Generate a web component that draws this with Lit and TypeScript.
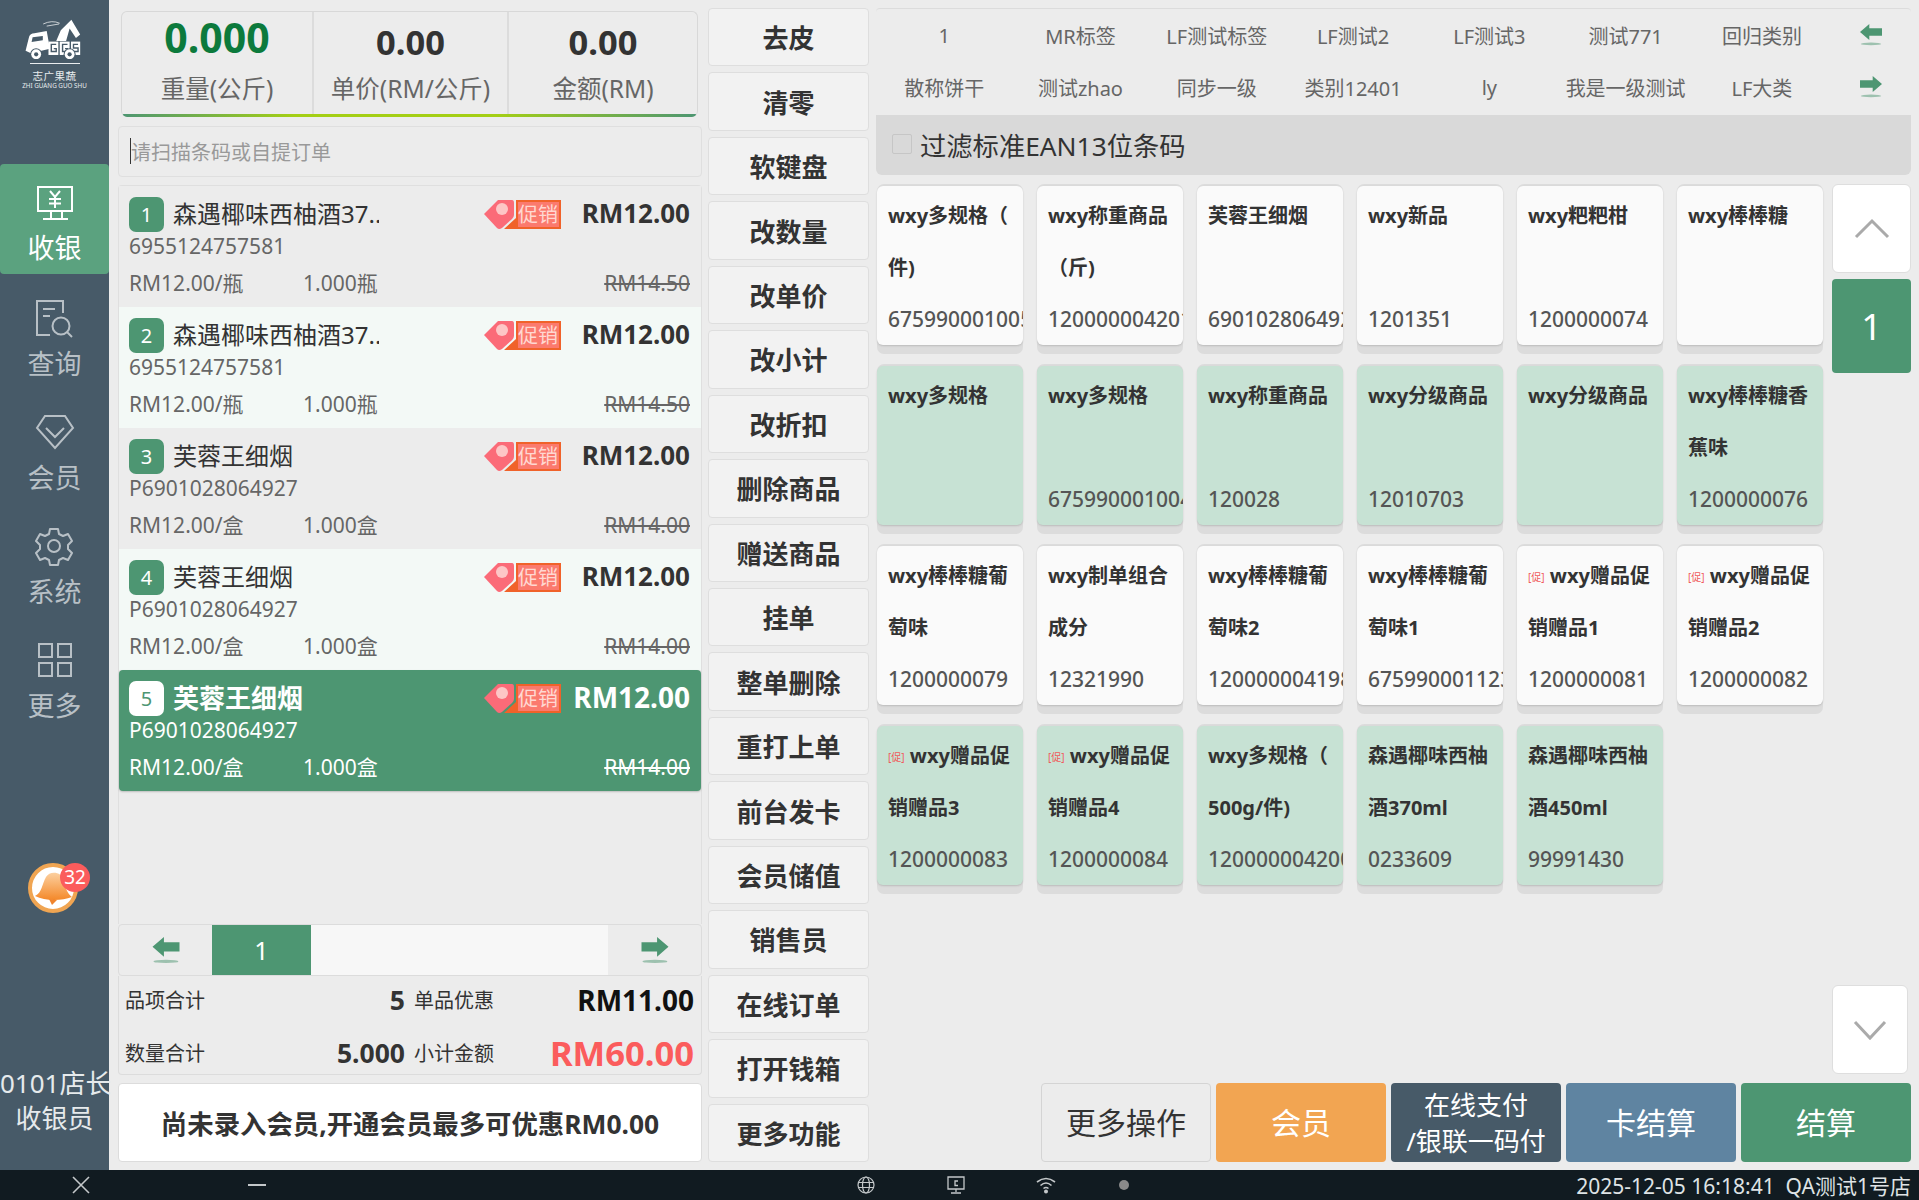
import { LitElement, html, css, svg, unsafeCSS } from "lit";
import { customElement } from "lit/decorators.js";

const FONT = unsafeCSS(`"Noto Sans", "Noto Sans CJK SC", sans-serif`);

const arrow = (dir: "l" | "r") => html`<svg class="arrow" viewBox="0 0 28 26">
  <g fill="#4d9672" transform="${dir === "l" ? "" : "translate(28,0) scale(-1,1)"}">
    <path d="M1 9.5 L12 0 V5 H27 V14 H12 V19 Z"/>
    <ellipse cx="14" cy="23.5" rx="12" ry="1.6" opacity=".5"/>
  </g></svg>`;

const navIcons: Record<string, unknown> = {
  cash: svg`<path d="M3 2H37V26H3ZM15 6L20 12L25 6M20 12V23M14 14H26M14 18.5H26M3 26M16 26V33M27 26V33M8 34H33"/>`,
  query: svg`<path d="M28 14V2H2V36H15M8 10H20M8 17H15"/><circle cx="26" cy="27" r="8.5"/><path d="M32 33l5 5"/>`,
  member: svg`<path d="M10 3H30L38 15L20 35L2 15ZM11 15L20 24L29 15"/>`,
  sys: svg`<path d="M15 2h8l1 5 4 2 5-2 4 7-4 4v4l4 4-4 7-5-2-4 2-1 5h-8l-1-5-4-2-5 2-4-7 4-4v-4l-4-4 4-7 5 2 4-2z" stroke-linejoin="round"/><circle cx="19" cy="19" r="6"/>`,
  more: svg`<path d="M4 3H17V16H4ZM23 3H36V16H23ZM4 22H17V35H4ZM23 22H36V35H23Z"/>`,
};

interface Card { title: unknown; line2?: string; code?: string; green?: boolean }
const promo = html`<span class="cu">[促]</span> `;
const cards: Card[] = [
  { title: "wxy多规格（", line2: "件)", code: "675990001005" },
  { title: "wxy称重商品", line2: "（斤)", code: "120000004201" },
  { title: "芙蓉王细烟", code: "6901028064927" },
  { title: "wxy新品", code: "1201351" },
  { title: "wxy粑粑柑", code: "1200000074" },
  { title: "wxy棒棒糖" },
  { title: "wxy多规格", green: true },
  { title: "wxy多规格", code: "675990001004", green: true },
  { title: "wxy称重商品", code: "120028", green: true },
  { title: "wxy分级商品", code: "12010703", green: true },
  { title: "wxy分级商品", green: true },
  { title: "wxy棒棒糖香", line2: "蕉味", code: "1200000076", green: true },
  { title: "wxy棒棒糖葡", line2: "萄味", code: "1200000079" },
  { title: "wxy制单组合", line2: "成分", code: "12321990" },
  { title: "wxy棒棒糖葡", line2: "萄味2", code: "120000004198" },
  { title: "wxy棒棒糖葡", line2: "萄味1", code: "675990001123" },
  { title: html`${promo}wxy赠品促`, line2: "销赠品1", code: "1200000081" },
  { title: html`${promo}wxy赠品促`, line2: "销赠品2", code: "1200000082" },
  { title: html`${promo}wxy赠品促`, line2: "销赠品3", code: "1200000083", green: true },
  { title: html`${promo}wxy赠品促`, line2: "销赠品4", code: "1200000084", green: true },
  { title: "wxy多规格（", line2: "500g/件)", code: "120000004200", green: true },
  { title: "森遇椰味西柚", line2: "酒370ml", code: "0233609", green: true },
  { title: "森遇椰味西柚", line2: "酒450ml", code: "99991430", green: true },
];

const items = [
  { n: 1, name: "森遇椰味西柚酒37..", code: "6955124757581", u: "瓶", old: "RM14.50" },
  { n: 2, name: "森遇椰味西柚酒37..", code: "6955124757581", u: "瓶", old: "RM14.50" },
  { n: 3, name: "芙蓉王细烟", code: "P6901028064927", u: "盒", old: "RM14.00" },
  { n: 4, name: "芙蓉王细烟", code: "P6901028064927", u: "盒", old: "RM14.00" },
  { n: 5, name: "芙蓉王细烟", code: "P6901028064927", u: "盒", old: "RM14.00" },
];

const midButtons = ["去皮","清零","软键盘","改数量","改单价","改小计","改折扣","删除商品","赠送商品","挂单","整单删除","重打上单","前台发卡","会员储值","销售员","在线订单","打开钱箱","更多功能"];
const tabs1 = ["1","MR标签","LF测试标签","LF测试2","LF测试3","测试771","回归类别"];
const tabs2 = ["散称饼干","测试zhao","同步一级","类别12401","ly","我是一级测试","LF大类"];

@customElement("app-root")
export class AppRoot extends LitElement {
  static styles = css`
    :host { display: flex; flex-direction: column; width: 1919px; height: 1200px; overflow: hidden; background: #ececec; font-family: ${FONT}; color: #333; }
    * { box-sizing: border-box; }
    .main { flex: 1; display: flex; min-height: 0; }
    .side { width: 109px; background: #475a68; display: flex; flex-direction: column; align-items: center; color: #b8c0c6; flex: none; }
    .logo { height: 164px; width: 100%; display: flex; flex-direction: column; align-items: center; padding-top: 18px; color: #fff; }
    .logo svg { display: block; margin-left: -6px; }
    .logo .rule { width: 50px; height: 1px; background: #e8ecee; margin-top: 4px; }
    .logo .cn { font-size: 10.5px; line-height: 11px; letter-spacing: 0.5px; margin-top: 7px; color: #e8ecee; }
    .logo .en { font-size: 6.3px; line-height: 8px; white-space: nowrap; color: #e8ecee; }
    .nav { width: 100%; height: 114px; display: flex; flex-direction: column; align-items: center; justify-content: flex-start; padding-top: 23px; font-size: 27px; line-height: 34px; gap: 8px; }
    .nav svg { fill: none; stroke: currentColor; stroke-width: 2; display: block; }
    .nav.active { height: 110px; background: #5ba27f; color: #fff; border-radius: 4px; padding-top: 21px; gap: 6px; margin-bottom: 2px; }
    .bell { position: relative; width: 50px; height: 50px; margin-top: 131px; margin-left: -3px; }
    .bell svg { display: block; }
    .badge { position: absolute; left: 32px; top: 0; width: 30px; height: 29px; border-radius: 50%; background: #fb5c5c; color: #fff; font-size: 19px; line-height: 29px; text-align: center; }
    .user { margin-top: auto; padding-bottom: 34px; color: #e6eaec; font-size: 26px; line-height: 35px; text-align: center; white-space: nowrap; width: 100%; }

    .left { width: 584px; margin-left: 9px; display: flex; flex-direction: column; padding-top: 11px; flex: none; }
    .scale { height: 106px; margin: 0 4px 0 3px; display: grid; grid-template-columns: 190px 195px 1fr; border: 1px solid #d8d8d8; border-bottom: 0; border-radius: 6px; position: relative; overflow: hidden; }
    .scale::after { content: ""; position: absolute; left: 0; right: 0; bottom: 0; height: 3px; background: linear-gradient(90deg,#4d9672,#a4cf15 30%,#a4cf15 65%,#4d9672); }
    .scale > div { display: flex; flex-direction: column; align-items: center; border-left: 2px solid #dcdcdc; }
    .scale > div:first-child { border-left: 0; }
    .scale b { font-size: 34.5px; line-height: 46px; margin-top: 7px; font-weight: 700; color: #333; }
    .scale b.big { font-size: 41px; color: #0c7a3c; margin-top: 0; line-height: 50px; }
    .scale span { font-size: 24.5px; line-height: 36px; color: #666; margin-top: 6px; }
    .scale div:first-child span { margin-top: 9px; }

    .search { height: 51px; margin-top: 9px; border: 1px solid #dfdfdf; border-radius: 4px; display: flex; align-items: center; padding: 0 0 1px 11px; font-size: 20px; color: #999; }
    .search i { width: 1px; height: 26px; background: #333; }

    .list { margin-top: 8px; flex: 1; display: flex; flex-direction: column; border: 1px solid #dfdfdf; border-bottom: 0; border-radius: 4px 4px 0 0; }
    .item { height: 121px; position: relative; padding: 10px 10px 0 10px; background: #ececec; color: #666; flex: none; }
    .item.even { background: #f3f9f6; }
    .item.sel { background: #4d9672; color: #fff; border-radius: 4px; box-shadow: 0 1px 2px rgba(0,0,0,.2); }
    .row1 { display: flex; align-items: center; height: 36px; }
    .no { width: 35px; height: 35px; border-radius: 7px; background: #4d9672; color: #fff; text-align: center; font-size: 20px; line-height: 35px; flex: none; }
    .sel .no { background: #fff; color: #4d9672; }
    .name { margin-left: 9px; font-size: 24px; line-height: 36px; color: #333; white-space: nowrap; max-width: 206px; overflow: hidden; }
    .sel .name { color: #fff; font-weight: 700; font-size: 26px; }
    .tag { position: absolute; right: 140px; top: 14px; display: block; }
    .price { position: absolute; right: 11px; top: 10px; font-size: 26px; line-height: 34px; font-weight: 700; color: #333; }
    .sel .price { color: #fff; font-size: 28px; }
    .code { font-size: 21px; line-height: 28px; margin-top: 0; }
    .row3 { display: flex; font-size: 21px; line-height: 28px; margin-top: 9px; position: relative; }
    .row3 .q { position: absolute; left: 174px; }
    .row3 s { position: absolute; right: 1px; }

    .pager { height: 52px; display: flex; border: 1px solid #dcdcdc; border-radius: 4px; flex: none; }
    .pager .a { width: 93px; display: flex; align-items: center; justify-content: center; }
    .arrow { display: block; width: 30px; height: 27px; }
    .tabs .arrow { width: 24px; height: 22px; }
    .pager .cur { width: 99px; background: #4d9672; color: #fff; font-size: 25px; display: flex; align-items: center; justify-content: center; }
    .pager .fill { flex: 1; background: #f7f7f7; }
    .sum { height: 99px; border: 1px solid #dcdcdc; border-top: 0; border-radius: 0 0 4px 4px; display: grid; grid-template-rows: 47px 52px; padding: 0 7px 0 6px; flex: none; }
    .sum > div { display: flex; align-items: center; position: relative; white-space: nowrap; }
    .sum > div:last-child { padding-top: 7px; }
    .sum .lab { font-size: 20px; color: #333; }
    .sum .v { position: absolute; right: 289px; font-weight: 700; color: #333; font-size: 26.5px; }
    .sum .lab2 { position: absolute; right: 200px; font-size: 20px; color: #333; }
    .sum .m { margin-left: auto; font-weight: 700; font-size: 28px; color: #111; }
    .sum .m.red { font-size: 34.6px; color: #fb5c5c; }
    .vip { height: 79px; margin: 8px 0; background: #fff; border: 1px solid #dcdcdc; border-radius: 4px; display: flex; align-items: center; justify-content: center; font-size: 26.4px; font-weight: 700; color: #333; flex: none; }

    .mid { width: 161px; margin-left: 6px; padding: 8px 0; display: grid; grid-template-rows: repeat(18, 1fr); gap: 6px; flex: none; }
    .mid div { background: #f2f2f2; border: 1px solid #dedede; border-radius: 4px; display: flex; align-items: center; justify-content: center; font-size: 26px; font-weight: 700; color: #333; }

    .right { width: 1035px; margin-left: 7px; padding-top: 8px; display: flex; flex-direction: column; flex: none; }
    .tabs { height: 107px; display: grid; grid-template-columns: repeat(7, 136.3px) 1fr; grid-template-rows: 1fr 1fr; border-top: 1px solid #dcdcdc; border-radius: 4px 4px 0 0; align-items: center; justify-items: center; font-size: 20px; color: #666; padding-bottom: 2px; }
    .filter { height: 60px; background: #d9d9d9; border-radius: 0 0 6px 6px; display: flex; align-items: center; padding: 0 0 2px 16px; font-size: 26.3px; color: #333; gap: 8px; }
    .filter i { width: 20px; height: 20px; border: 1px solid #c6c6c6; border-radius: 2px; background: #d9d9d9; }
    .body { flex: 1; min-height: 0; margin-top: 9px; display: flex; }
    .gridwrap { flex: 1; min-width: 0; display: flex; flex-direction: column; }
    .cards { display: grid; grid-template-columns: repeat(6, 146px); grid-auto-rows: 170px; column-gap: 14px; row-gap: 10px; margin-left: 1px; }
    .card { height: 170px; border-radius: 7px; background: #dcdcdc; padding: 2px 0 9px; }
    .card > div { height: 100%; border-radius: 6px; background: #fafafa; box-shadow: 0 1px 2px rgba(0,0,0,.15); padding: 4px 11px 0; overflow: hidden; font-size: 20px; font-weight: 700; color: #333; display: grid; grid-template-rows: 51.5px 51.5px 1fr; }
    .card.g > div { background: #c7e2d4; }
    .card span.t { line-height: 51px; white-space: nowrap; }
    .card span.c { line-height: 52px; font-weight: 500; color: #555; white-space: nowrap; font-size: 21px; }
    .cu { color: #f05a5a; font-size: 10px; font-weight: 400; vertical-align: 2px; }
    .pagecol { width: 79px; display: flex; flex-direction: column; flex: none; }
    .pbtn { background: #fff; border: 1px solid #dedede; border-radius: 6px; display: flex; align-items: center; justify-content: center; }
    .pbtn svg { fill: none; stroke: #aaa; stroke-width: 3; }
    .pup { height: 89px; margin-top: 0; }
    .pcur { height: 94px; margin-top: 6px; background: #4d9672; border-radius: 4px; color: #fff; font-size: 36px; display: flex; align-items: center; justify-content: center; }
    .pdown { height: 89px; margin-top: auto; margin-bottom: 9px; width: 76px; }
    .acts { height: 79px; margin: 0 0 8px 165px; display: grid; grid-template-columns: repeat(5, 170px); column-gap: 5px; flex: none; }
    .acts div { border-radius: 4px; color: #fff; display: flex; align-items: center; justify-content: center; text-align: center; font-size: 30px; line-height: 36px; }
    .acts .more { background: #ececec; border: 1px solid #d4d4d4; color: #333; }
    .acts .vip2 { background: #f2a552; }
    .acts .two { font-size: 26px; background: #475a68; }
    .acts .cardpay { background: #5f84a1; }
    .acts .pay { background: #4d9672; }

    .bar { height: 30px; background: #111b21; color: #dfe3e5; flex: none; display: grid; grid-template-columns: 1fr auto; font-size: 21px; align-items: center; }
    .bar .r { padding-right: 8px; white-space: nowrap; }
    .bar .icons { display: flex; align-items: center; height: 30px; padding-left: 72px; }
    .bar svg { display: block; fill: none; stroke: #c4c8ca; }
    .ic1 { margin-left: 158px; }
    .ic2 { margin-left: 591px; }
    .ic3 { margin-left: 71px; }
    .ic4 { margin-left: 70px; }
    .dot { width: 10px; height: 10px; background: #8a8a8a; border-radius: 50%; margin-left: 63px; }
  `;

  render() {
    return html`
      <div class="main">
        <aside class="side">
          <div class="logo">
            <svg width="60" height="40.5" viewBox="25 25 170 115" fill="#fff">
              <path d="M35 118 L45 78 Q48 68 60 68 L95 62 L104 112 L50 125Z"/>
              <path d="M55 80 L84 76 L84 88 L52 93Z" fill="#475a68"/>
              <path d="M122 90 L135 60 L165 30 L190 72 L178 82 L160 55 L150 90 Z"/>
              <path d="M85 42 Q110 30 132 40 M95 48 L130 42" fill="none" stroke="#fff" stroke-width="2"/>
              <rect x="100" y="92" width="28" height="38"/><rect x="132" y="92" width="28" height="38"/><rect x="164" y="92" width="26" height="38"/>
              <path d="M122 100H108V120H122V112H115M154 100H140V120H154V112H147M184 100H171V110H184V120H169" fill="none" stroke="#475a68" stroke-width="4"/>
              <circle cx="65" cy="128" r="17" fill="#475a68"/><circle cx="65" cy="128" r="14"/><circle cx="65" cy="128" r="6" fill="#475a68"/>
              <circle cx="160" cy="128" r="17" fill="#475a68"/><circle cx="160" cy="128" r="14"/><circle cx="160" cy="128" r="6" fill="#475a68"/>
            </svg>
            <div class="rule"></div>
            <div class="cn">志广果蔬</div>
            <div class="en">ZHI GUANG GUO SHU</div>
          </div>
          ${this.nav("cash", "收银", true)}
          ${this.nav("query", "查询")}
          ${this.nav("member", "会员")}
          ${this.nav("sys", "系统")}
          ${this.nav("more", "更多")}
          <div class="bell">
            <svg width="50" height="50" viewBox="0 0 50 50">
              <defs><linearGradient id="bg" x1="0" y1="0" x2="0" y2="1"><stop offset="0" stop-color="#fcd0a0"/><stop offset="1" stop-color="#f4892a"/></linearGradient></defs>
              <circle cx="25" cy="25" r="23" fill="#fff" stroke="#f0a552" stroke-width="4"/>
              <path d="M7 33 C14 30 14 21 18 14 C22 7 34 9 36 17 C37 24 39 30 44 34 C33 38 17 38 7 33Z" fill="url(#bg)"/>
              <path d="M21 36 L24 42 L29 37Z" fill="#f0842c"/>
            </svg>
            <div class="badge">32</div>
          </div>
          <div class="user">0101店长<br />收银员</div>
        </aside>

        <section class="left">
          <div class="scale">
            <div><b class="big">0.000</b><span>重量(公斤)</span></div>
            <div><b>0.00</b><span>单价(RM/公斤)</span></div>
            <div><b>0.00</b><span>金额(RM)</span></div>
          </div>
          <div class="search"><i></i>请扫描条码或自提订单</div>
          <div class="list">
            ${items.map((it) => html`
              <div class="item ${it.n % 2 === 0 ? "even" : ""} ${it.n === 5 ? "sel" : ""}">
                <div class="row1"><div class="no">${it.n}</div><div class="name">${it.name}</div></div>
                <svg class="tag" width="77" height="30" viewBox="0 0 77 30">
                  <path d="M20 29 L32 18 V0 H77 V29 Z" fill="#f0622a"/>
                  <rect x="34" y="2" width="41" height="25" fill="#fb7a6e"/>
                  <path d="M0 14 L14 0 H28 Q30 0 30 3 V15 Q30 17 28 19 L18 28 Q15 30 13 28 Z" fill="#fb6b78"/>
                  <circle cx="18" cy="9" r="6" fill="#fdc6c6"/>
                  <text x="54" y="22" font-size="20" fill="#ffd8d2" text-anchor="middle">促销</text>
                </svg>
                <div class="price">RM12.00</div>
                <div class="code">${it.code}</div>
                <div class="row3"><span>RM12.00/${it.u}</span><span class="q">1.000${it.u}</span><s>${it.old}</s></div>
              </div>`)}
          </div>
          <div class="pager">
            <div class="a">${arrow("l")}</div><div class="cur">1</div><div class="fill"></div><div class="a">${arrow("r")}</div>
          </div>
          <div class="sum">
            <div><span class="lab">品项合计</span><span class="v">5</span><span class="lab2">单品优惠</span><span class="m">RM11.00</span></div>
            <div><span class="lab">数量合计</span><span class="v">5.000</span><span class="lab2">小计金额</span><span class="m red">RM60.00</span></div>
          </div>
          <div class="vip">尚未录入会员,开通会员最多可优惠RM0.00</div>
        </section>

        <section class="mid">${midButtons.map((b) => html`<div>${b}</div>`)}</section>

        <section class="right">
          <div class="tabs">
            ${tabs1.map((t) => html`<div>${t}</div>`)}<div>${arrow("l")}</div>
            ${tabs2.map((t) => html`<div>${t}</div>`)}<div>${arrow("r")}</div>
          </div>
          <div class="filter"><i></i>过滤标准EAN13位条码</div>
          <div class="body">
            <div class="gridwrap">
              <div class="cards">
                ${cards.map((c) => html`<div class="card ${c.green ? "g" : ""}"><div>
                  <span class="t">${c.title}</span><span class="t">${c.line2 ?? ""}</span><span class="c">${c.code ?? ""}</span>
                </div></div>`)}
              </div>
            </div>
            <div class="pagecol">
              <div class="pbtn pup"><svg width="36" height="22" viewBox="0 0 36 22"><path d="M2 19L18 3L34 19"/></svg></div>
              <div class="pcur">1</div>
              <div class="pbtn pdown"><svg width="36" height="22" viewBox="0 0 36 22"><path d="M3 3L18 19L33 3"/></svg></div>
            </div>
          </div>
          <div class="acts">
            <div class="more">更多操作</div>
            <div class="vip2">会员</div>
            <div class="two">在线支付<br />/银联一码付</div>
            <div class="cardpay">卡结算</div>
            <div class="pay">结算</div>
          </div>
        </section>
      </div>
      <footer class="bar">
        <div class="icons">
          <svg width="18" height="18" viewBox="0 0 18 18" stroke-width="1.6"><path d="M1 1L17 17M17 1L1 17"/></svg>
          <svg class="ic1" width="18" height="4" viewBox="0 0 18 4" stroke-width="2"><path d="M0 2H18"/></svg>
          <svg class="ic2" width="18" height="18" viewBox="0 0 18 18" stroke-width="1.2"><circle cx="9" cy="9" r="8"/><ellipse cx="9" cy="9" rx="3.5" ry="8"/><path d="M1.5 6.5H16.5M1.5 11.5H16.5"/></svg>
          <svg class="ic3" width="20" height="18" viewBox="0 0 20 18" stroke-width="1.3"><path d="M2 1H18V13H2ZM10 13V16M5 17H15M12 5H9V9.5H12"/></svg>
          <svg class="ic4" width="20" height="18" viewBox="0 0 20 18" stroke-width="1.6"><path d="M1 6Q10 -1 19 6M4.5 9.5Q10 4.5 15.5 9.5M7.5 12.5Q10 10.5 12.5 12.5"/><circle cx="10" cy="15.5" r="1.2" fill="#c4c8ca"/></svg>
          <div class="dot"></div>
        </div>
        <div class="r">2025-12-05 16:18:41&nbsp; QA测试1号店</div>
      </footer>
    `;
  }

  nav(icon: string, label: string, active = false) {
    return html`<div class="nav ${active ? "active" : ""}">
      <svg width="40" height="40" viewBox="0 0 40 40">${navIcons[icon]}</svg>
      <div>${label}</div>
    </div>`;
  }
}
